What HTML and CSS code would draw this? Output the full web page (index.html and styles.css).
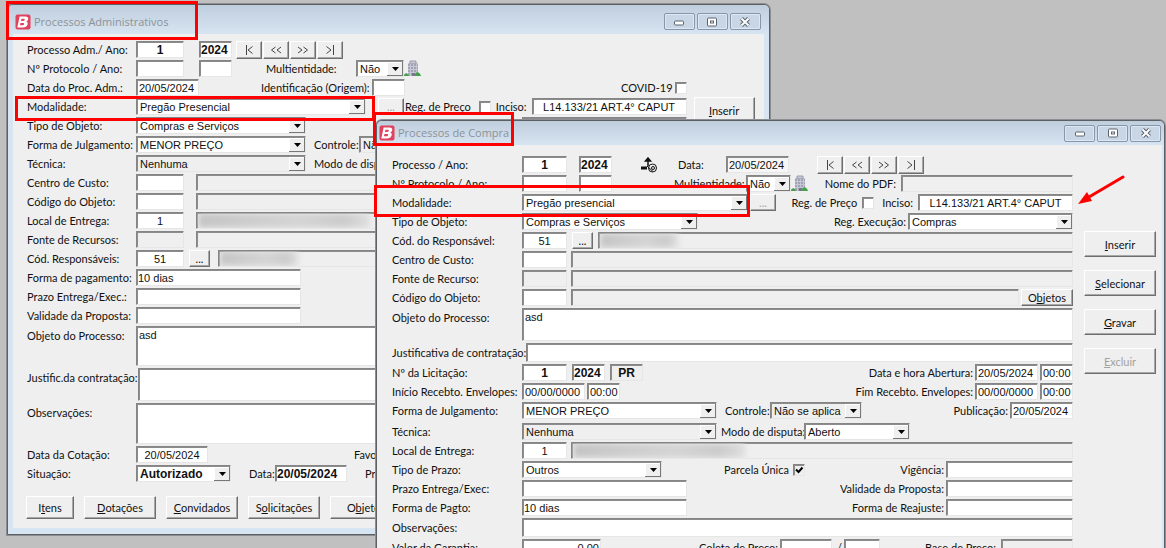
FILE: index.html
```
<!DOCTYPE html>
<html lang="pt-BR">
<head>
<meta charset="utf-8">
<title>Processos Administrativos</title>
<link rel="stylesheet" href="styles.css">
</head>
<body>
<svg class="defs" aria-hidden="true">
  <symbol id="logo" viewBox="0 0 16 16"><rect x=".5" y=".5" width="15" height="15" rx="2" fill="#e0425f"/><path d="M4.6 2.5h5.6c2.8 0 3.5 1.5 2.9 3.1-.4 1-1 1.700-2 2 1.500.4 1.900 1.500 1.500 2.900-.6 2-2.200 3-4.600 3H2.300zM6.500 4.800 6 6.900h2.300c1.700 0 2.100-2.100.5-2.100zM5.500 8.900l-.6 2.300h2.600c1.800 0 2.200-2.300.5-2.300z" fill="#fff" fill-rule="evenodd"/></symbol>
  <symbol id="first" viewBox="0 0 12 12"><path d="M3.500 1v10M9.500 2.500 5 6l4.500 3.500" fill="none" stroke="#444"/></symbol>
  <symbol id="prev" viewBox="0 0 12 12"><path d="M5.500 3 1.500 6l4 3M11 3 7 6l4 3" fill="none" stroke="#444"/></symbol>
  <symbol id="next" viewBox="0 0 12 12"><path d="M1 3l4 3-4 3M6.500 3l4 3-4 3" fill="none" stroke="#444"/></symbol>
  <symbol id="last" viewBox="0 0 12 12"><path d="M2.500 2.500 7 6 2.500 9.500M9.500 1v10" fill="none" stroke="#444"/></symbol>
  <symbol id="building" viewBox="0 0 17 17"><path d="M6 1h6v3H6z" fill="#c9c9d6" stroke="#9a9aaa"/><path d="M4 3.500h10V16H4z" fill="#a3a3b6"/><path d="M4 6.500h10M4 9.500h10M4 12.500h10M6.500 4v12M9.500 4v12M12.500 4v12" stroke="#c6c6d4"/><path d="M8 13h3v3H8z" fill="#77778a"/><path d="M0 16c0-2 1.500-3 3-2.500S5 16 5 16zM11 16c0-3 1.500-4.500 3.500-3.500S17 16 17 16z" fill="#43a04b"/></symbol>
  <symbol id="min" viewBox="0 0 12 12"><rect x="1.500" y="5" width="9" height="4" rx="1" fill="#fff" stroke="#5b6470"/></symbol>
  <symbol id="max" viewBox="0 0 12 12"><rect x="1.500" y="2" width="9" height="8" rx="1" fill="#fff" stroke="#5b6470"/><rect x="4.500" y="5" width="3" height="2" fill="#fff" stroke="#5b6470"/></symbol>
  <symbol id="close" viewBox="0 0 12 12"><path d="m2.500 2.500 7 7m0-7-7 7" stroke="#5b6470" stroke-width="4"/><path d="m2.500 2.500 7 7m0-7-7 7" stroke="#fff" stroke-width="2"/></symbol>
</svg>
<main class="desktop">

<section class="window window-adm">
  <header class="titlebar">
    <svg class="logo"><use href="#logo"/></svg><h1>Processos Administrativos</h1>
    <div class="controls"><button aria-label="Minimizar"><svg><use href="#min"/></svg></button><button aria-label="Maximizar"><svg><use href="#max"/></svg></button><button aria-label="Fechar"><svg><use href="#close"/></svg></button></div>
  </header>
  <div class="content">
    <form class="form">
      <div class="row"><label class="lab" for="a1">Processo Adm./ Ano:</label><input class="w48 center bold" id="a1" value="1"><input class="w32 m15 bold" aria-label="Ano" value="2024">
        <div class="nav m4"><button type="button" aria-label="Primeiro"><svg><use href="#first"/></svg></button><button type="button" aria-label="Anterior"><svg><use href="#prev"/></svg></button><button type="button" aria-label="Próximo"><svg><use href="#next"/></svg></button><button type="button" aria-label="Último"><svg><use href="#last"/></svg></button></div></div>
      <div class="row"><label class="lab" for="a2">Nº Protocolo / Ano:</label><input class="w48" id="a2"><input class="w32 m15" aria-label="Ano do protocolo"><label class="w90 m34" for="a3">Multientidade:</label><select class="w48" id="a3"><option>Não</option></select><svg class="building"><use href="#building"/></svg></div>
      <div class="row"><label class="lab" for="a4">Data do Proc. Adm.:</label><input class="w64 date" id="a4" value="20/05/2024"><label class="w111 m62" for="a5">Identificação (Origem):</label><input class="w32" id="a5"><div class="right"><label for="a6">COVID-19</label><input type="checkbox" id="a6"></div></div>
      <div class="row"><label class="lab" for="a7">Modalidade:</label><select class="w230" id="a7"><option>Pregão Presencial</option></select><button type="button" class="btn w26 m12 off">...</button><div class="right"><label for="a8">Reg. de Preço</label><input class="m8" type="checkbox" id="a8"><label class="m5" for="a9">Inciso:</label><input class="w155 m5 center" id="a9" value="L14.133/21 ART.4° CAPUT"></div></div>
      <div class="row"><label class="lab" for="a10">Tipo de Objeto:</label><select class="w170" id="a10"><option>Compras e Serviços</option></select><div class="right"><input class="w165 gray" aria-label="Complemento"></div></div>
      <div class="row"><label class="lab" for="a11">Forma de Julgamento:</label><select class="w170" id="a11"><option>MENOR PREÇO</option></select><label class="w45 m8" for="a12">Controle:</label><select class="w92 gray" id="a12"><option>Não se aplica</option></select></div>
      <div class="row"><label class="lab" for="a13">Técnica:</label><select class="w170 gray" id="a13"><option>Nenhuma</option></select><label class="m8" for="a14">Modo de disputa:</label><select class="w106" id="a14"><option>Aberto</option></select></div>
      <div class="row"><label class="lab" for="a15">Centro de Custo:</label><input class="w48" id="a15"><input class="fill gray m12" aria-label="Descrição do centro de custo" readonly></div>
      <div class="row"><label class="lab" for="a16">Código do Objeto:</label><input class="w48" id="a16"><input class="fill gray m12" aria-label="Descrição do objeto" readonly></div>
      <div class="row"><label class="lab" for="a17">Local de Entrega:</label><input class="w48 center" id="a17" value="1"><div class="masked fill m12"><span class="smudge long"></span></div></div>
      <div class="row"><label class="lab" for="a18">Fonte de Recursos:</label><input class="w48 gray" id="a18"><input class="fill gray m12" aria-label="Descrição da fonte" readonly></div>
      <div class="row"><label class="lab" for="a19">Cód. Responsáveis:</label><input class="w48 center" id="a19" value="51"><button type="button" class="btn w21 m5">...</button><div class="masked fill m8"><span class="smudge short"></span></div></div>
      <div class="row"><label class="lab" for="a20">Forma de pagamento:</label><input class="w165" id="a20" value="10 dias"></div>
      <div class="row"><label class="lab" for="a21">Prazo Entrega/Exec.:</label><input class="w165" id="a21"></div>
      <div class="row"><label class="lab" for="a22">Validade da Proposta:</label><input class="w165" id="a22"></div>
      <div class="row tall"><label class="lab" for="a23">Objeto do Processo:</label><textarea class="fill h40" id="a23">asd</textarea></div>
      <div class="row tall"><label class="lab" for="a24">Justific.da contratação:</label><textarea class="fill h33" id="a24"></textarea></div>
      <div class="row tall"><label class="lab" for="a25">Observações:</label><textarea class="fill h41" id="a25"></textarea></div>
      <div class="row"><label class="lab" for="a26">Data da Cotação:</label><input class="w72 center" id="a26" value="20/05/2024"><label class="m146" for="a27">Favorecido:</label><input class="w165" id="a27"></div>
      <div class="row"><label class="lab" for="a28">Situação:</label><select class="w95 bold" id="a28"><option>Autorizado</option></select><label class="w26 m18" for="a29">Data:</label><input class="w72 bold" id="a29" value="20/05/2024"><label class="m18" for="a30">Prazo:</label><input class="w48" id="a30"></div>
      <div class="actions"><button type="button" class="btn w48"><span>I<u>t</u>ens</span></button><button type="button" class="btn w72"><span><u>D</u>otações</span></button><button type="button" class="btn w72"><span><u>C</u>onvidados</span></button><button type="button" class="btn w72"><span>S<u>o</u>licitações</span></button><button type="button" class="btn w72"><span>O<u>b</u>jetos</span></button></div>
    </form>
    <aside class="side"><button class="btn"><span><u>I</u>nserir</span></button></aside>
  </div>
</section>

<section class="window window-compra">
  <header class="titlebar">
    <svg class="logo"><use href="#logo"/></svg><h1>Processos de Compra</h1>
    <div class="controls"><button aria-label="Minimizar"><svg><use href="#min"/></svg></button><button aria-label="Maximizar"><svg><use href="#max"/></svg></button><button aria-label="Fechar"><svg><use href="#close"/></svg></button></div>
  </header>
  <div class="content">
    <form class="form">
      <div class="row"><label class="lab" for="b1">Processo / Ano:</label><input class="w45 center bold" id="b1" value="1"><input class="w32 m12 bold" aria-label="Ano" value="2024"><svg class="tool" viewBox="0 0 18 16"><path d="M1 9.500h6v3H1z" fill="#111"/><path d="M8 2v7M5.500 4 8 1l2.500 3z" fill="#111" stroke="#111" stroke-width="1.500"/><circle cx="12.500" cy="11" r="4" fill="#efefef" stroke="#111"/><circle cx="13" cy="11" r="1.500" fill="none" stroke="#111"/><path d="m7 9 6 5.500" stroke="#111"/></svg><label class="w48 m20" for="b2">Data:</label><input class="w64 date pale" id="b2" value="20/05/2024">
        <div class="nav m28"><button type="button" aria-label="Primeiro"><svg><use href="#first"/></svg></button><button type="button" aria-label="Anterior"><svg><use href="#prev"/></svg></button><button type="button" aria-label="Próximo"><svg><use href="#next"/></svg></button><button type="button" aria-label="Último"><svg><use href="#last"/></svg></button></div></div>
      <div class="row"><label class="lab" for="b3">Nº Protocolo / Ano:</label><input class="w45" id="b3"><input class="w32 m12" aria-label="Ano do protocolo"><label class="w72 m62" for="b4">Multientidade:</label><select class="w45" id="b4"><option>Não</option></select><svg class="building"><use href="#building"/></svg><div class="right"><label for="b5">Nome do PDF:</label><input class="w172 m5 gray" id="b5"></div></div>
      <div class="row"><label class="lab" for="b6">Modalidade:</label><select class="w226" id="b6"><option>Pregão presencial</option></select><button type="button" class="btn w26 m2 off">...</button><div class="right"><label for="b7">Reg. de Preço</label><input class="m5" type="checkbox" id="b7"><label class="m8" for="b8">Inciso:</label><input class="w155 m5 center" id="b8" value="L14.133/21 ART.4° CAPUT"></div></div>
      <div class="row"><label class="lab" for="b9">Tipo de Objeto:</label><select class="w176" id="b9"><option>Compras e Serviços</option></select><div class="right"><label for="b10">Reg. Execução:</label><select class="w165 m2" id="b10"><option>Compras</option></select></div></div>
      <div class="row"><label class="lab" for="b11">Cód. do Responsável:</label><input class="w45 center" id="b11" value="51"><button type="button" class="btn w21 m5">...</button><div class="masked fill m5"><span class="smudge short"></span></div></div>
      <div class="row"><label class="lab" for="b12">Centro de Custo:</label><input class="w45" id="b12"><input class="fill gray m4" aria-label="Descrição do centro de custo" readonly></div>
      <div class="row"><label class="lab" for="b13">Fonte de Recurso:</label><input class="w45 gray" id="b13"><input class="fill gray m4" aria-label="Descrição da fonte" readonly></div>
      <div class="row"><label class="lab" for="b14">Código do Objeto:</label><input class="w45" id="b14"><input class="fill gray m4" aria-label="Descrição do objeto" readonly><button type="button" class="btn w52 m2"><span>O<u>b</u>jetos</span></button></div>
      <div class="row tall"><label class="lab" for="b15">Objeto do Processo:</label><textarea class="fill h33" id="b15">asd</textarea></div>
      <div class="row r19"><label class="lab" for="b16">Justificativa de contratação:</label><input class="fill" id="b16"></div>
      <div class="row"><label class="lab" for="b17">Nº da Licitação:</label><input class="w45 center bold" id="b17" value="1"><input class="w32 m5 bold" aria-label="Ano da licitação" value="2024"><input class="w32 m5 bold gray center" aria-label="Sigla" value="PR"><div class="right"><label for="b18">Data e hora Abertura:</label><input class="w64 m2 date" id="b18" value="20/05/2024"><input class="w32 m2 date" aria-label="Hora de abertura" value="00:00"></div></div>
      <div class="row"><label class="lab" for="b19">Início Recebto. Envelopes:</label><input class="w64 date" id="b19" value="00/00/0000"><input class="w32 m2 date" aria-label="Hora inicial" value="00:00"><div class="right"><label for="b20">Fim Recebto. Envelopes:</label><input class="w64 m2 date" id="b20" value="00/00/0000"><input class="w32 m2 date" aria-label="Hora final" value="00:00"></div></div>
      <div class="row"><label class="lab" for="b21">Forma de Julgamento:</label><select class="w195" id="b21"><option>MENOR PREÇO</option></select><label class="w45 m8" for="b22">Controle:</label><select class="w92 gray" id="b22"><option>Não se aplica</option></select><div class="right"><label for="b23">Publicação:</label><input class="w64 m2 date" id="b23" value="20/05/2024"></div></div>
      <div class="row spaced"><label class="lab" for="b24">Técnica:</label><select class="w195 gray" id="b24"><option>Nenhuma</option></select><label class="w83 m4" for="b25">Modo de disputa:</label><select class="w106" id="b25"><option>Aberto</option></select></div>
      <div class="row"><label class="lab" for="b26">Local de Entrega:</label><input class="w45 center" id="b26" value="1"><div class="masked fill m4"><span class="smudge long"></span></div></div>
      <div class="row"><label class="lab" for="b27">Tipo de Prazo:</label><select class="w140" id="b27"><option>Outros</option></select><label class="w67 m62" for="b28">Parcela Única</label><input type="checkbox" id="b28" checked><div class="right"><label for="b29">Vigência:</label><input class="w127 m2" id="b29"></div></div>
      <div class="row"><label class="lab" for="b30">Prazo Entrega/Exec:</label><input class="w165" id="b30"><div class="right"><label for="b31">Validade da Proposta:</label><input class="w127 m2" id="b31"></div></div>
      <div class="row"><label class="lab" for="b32">Forma de Pagto:</label><input class="w165" id="b32" value="10 dias"><div class="right"><label for="b33">Forma de Reajuste:</label><input class="w127 m2" id="b33"></div></div>
      <div class="row r19"><label class="lab" for="b34">Observações:</label><input class="fill" id="b34"></div>
      <div class="row"><label class="lab" for="b35">Valor da Garantia:</label><input class="w79 end" id="b35" value="0,00"><div class="right"><label for="b36">Coleta de Preço:</label><input class="w52 m2" id="b36"><span class="m5">/</span><input class="w36 m2" aria-label="Ano da coleta"><label class="m45" for="b37">Base de Preço:</label><input class="w72 m5 gray" id="b37"></div></div>
    </form>
    <aside class="side"><button class="btn"><span><u>I</u>nserir</span></button><button class="btn"><span><u>S</u>elecionar</span></button><button class="btn"><span><u>G</u>ravar</span></button><button class="btn off" disabled><span><u>E</u>xcluir</span></button></aside>
  </div>
</section>

<div class="mark mark-title-adm"></div>
<div class="mark mark-mod-adm"></div>
<div class="mark mark-title-compra"></div>
<div class="mark mark-mod-compra"></div>
<svg class="arrow" viewBox="0 0 48 32"><path d="M46 3 12 23" stroke="#f00" stroke-width="3" stroke-linecap="round"/><path d="m1 30 9-12 5 9z" fill="#f00"/></svg>
</main>
</body>
</html>
```

FILE: styles.css
```
* { box-sizing: border-box; }
body { margin: 0; background: #c0c0c0; color: #111; font: 11px/13px Lato, "Liberation Sans", sans-serif; }
.defs { display: none; }
.desktop { position: relative; height: 100vh; overflow: hidden; }

.window { position: absolute; background: #d7e4f2; border: 1px solid #5c6064; border-radius: 6px 6px 0 0; box-shadow: 0 0 0 1px #8b8f94; }
.window-adm { left: 7px; top: 4px; right: 34%; padding: 0 5px 6px; }
.window-compra { left: 376px; top: 120px; right: 1px; padding: 0 2px 6px 0; }
.titlebar { display: flex; align-items: center; background: linear-gradient(#bfcedd, #d7e4f2); }
.window-adm .titlebar { height: 29px; margin: 0 -5px; padding: 4px 8px 0 7px; border-radius: 5px 5px 0 0; }
.window-compra .titlebar { height: 24px; margin-right: -2px; padding: 0 3px 0 2px; border-radius: 5px 5px 0 0; }
.logo { width: 16px; height: 16px; }
h1 { margin: 0 0 0 3px; font: 11px/16px "Open Sans", "Noto Sans", sans-serif; color: #8d9298; }
.controls { display: flex; gap: 2px; margin-left: auto; }
.controls button { display: flex; align-items: center; justify-content: center; width: 31px; height: 17px; padding: 0; background: #c8d6e5; border: 1px solid #8796a8; border-radius: 2px; box-shadow: inset 0 0 0 1px #dce8f3; }
.controls svg, .nav svg { width: 12px; height: 12px; }

.content { display: flex; background: #efefef; }
.window-adm .content { padding: 7px 9px 9px 14px; gap: 7px; }
.window-compra .content { padding: 11px 6px 9px 15px; gap: 11px; }
.form { flex: 1; min-width: 0; display: flex; flex-direction: column; gap: 2px; }
.row { display: flex; align-items: center; height: 17px; }
.row > *, .right > * { flex-shrink: 0; }
.row.r19 { height: 19px; }
.row.spaced { margin-top: 2px; }
.row.tall { height: auto; align-items: flex-start; }
.row.tall .lab { padding-top: 3px; }
.lab { min-width: 109px; }
.window-compra .lab { min-width: 130px; }
label { white-space: nowrap; }
.right { display: flex; align-items: center; margin-left: auto; height: 100%; }
.row > .fill { flex: 1 1 0; min-width: 0; }

input, select, textarea, .masked { height: 100%; margin: 0; padding: 0 1px; font: 11px/13px "Liberation Sans", sans-serif; color: #111; background-color: #fff; border: 1px solid; border-color: #858585 #e6e6e6 #e6e6e6 #858585; border-radius: 0; box-shadow: inset 1px 1px #8c8c8c; outline: 0; }
textarea { display: block; resize: none; padding: 2px; overflow: hidden; }
select { appearance: none; padding: 1px 18px 0 3px; background-repeat: no-repeat; background-position: right 0 top 1px; background-image: url("data:image/svg+xml,%3Csvg xmlns='http://www.w3.org/2000/svg' width='16' height='14'%3E%3Cpath d='M0 0h16v14H0z' fill='%23777'/%3E%3Cpath d='M0 0h15v13H0z' fill='%23fff'/%3E%3Cpath d='M1 1h14v12H1z' fill='%23efefef'/%3E%3Cpath d='M5 5h7L8.500 9z'/%3E%3C/svg%3E"); }
input[type="checkbox"] { appearance: none; width: 12px; height: 12px; margin-left: 2px; padding: 0; }
input[type="checkbox"].m5 { margin-left: 5px; }
input[type="checkbox"].m8 { margin-left: 8px; }
input[type="checkbox"]:checked { background: url("data:image/svg+xml,%3Csvg xmlns='http://www.w3.org/2000/svg' width='10' height='10'%3E%3Cpath d='m2 4.500 2.500 2.500L8.500 2.500' fill='none' stroke='%23000' stroke-width='2'/%3E%3C/svg%3E"); }
.gray { background-color: #efefef; }
.pale { background-color: #f6f6f6; }
.center { text-align: center; }
.end { text-align: right; }
.bold { font-weight: 700; font-size: 12px; }
input.date { padding: 0 0 0 2px; }
.masked { background: #efefef; overflow: hidden; }
.smudge { display: block; height: 15px; filter: blur(3px); background: linear-gradient(90deg, #c4c4c4, #cecece 35%, #d4d4d4 60%, #cbcbcb 85%, #dedede); }
.smudge.long { width: 172px; }
.smudge.short { width: 78px; }

.btn, .nav button { display: flex; align-items: center; justify-content: center; height: 100%; padding: 0; font: inherit; color: #111; background: #efefef; border: 1px solid; border-color: #fff #6e6e6e #6e6e6e #fff; box-shadow: inset -1px -1px #a8a8a8; }
.btn.off { color: #a2a2a2; }
.nav { display: flex; gap: 1px; height: 18px; }
.nav button { width: 26px; }
.actions { display: flex; gap: 10px; height: 23px; margin: 12px 0 0 -1px; }
.side { display: flex; flex-direction: column; flex-shrink: 0; gap: 13px; }
.side .btn { width: 100%; height: 26px; }
.window-adm .side { width: 61px; padding-top: 56px; }
.window-compra .side { width: 72px; padding-top: 75px; }
.building { width: 17px; height: 17px; }
.tool { width: 18px; height: 16px; margin-left: 28px; }

.h33 { height: 33px; } .h40 { height: 40px; } .h41 { height: 41px; }
.w21 { width: 21px; } .w26 { width: 26px; } .w32 { width: 33px; } .w36 { width: 36px; }
.w45 { width: 45px; } .w48 { width: 48px; } .w52 { width: 52px; } .w64 { width: 63px; }
.w67 { width: 67px; } .w72 { width: 72px; } .w79 { width: 79px; } .w83 { width: 83px; } .w90 { width: 90px; }
.w92 { width: 92px; } .w95 { width: 95px; } .w106 { width: 106px; } .w111 { width: 111px; } .w127 { width: 127px; }
.w140 { width: 140px; } .w155 { width: 155px; } .w165 { width: 165px; } .w170 { width: 170px; }
.w172 { width: 172px; } .w176 { width: 176px; } .w195 { width: 195px; } .w226 { width: 226px; } .w230 { width: 230px; }
.m2 { margin-left: 2px; } .m4 { margin-left: 4px; } .m5 { margin-left: 5px; } .m8 { margin-left: 8px; }
.m12 { margin-left: 12px; } .m15 { margin-left: 15px; } .m18 { margin-left: 18px; } .m20 { margin-left: 20px; } .m28 { margin-left: 28px; }
.m34 { margin-left: 34px; } .m45 { margin-left: 45px; } .m62 { margin-left: 62px; }
.m146 { margin-left: 146px; }

.mark { position: absolute; border: 3px solid #f00; pointer-events: none; }
.mark-title-adm { left: 6px; top: 1px; width: 192px; height: 39px; }
.mark-mod-adm { left: 15px; top: 96px; width: 360px; height: 25px; }
.mark-title-compra { left: 373px; top: 112px; width: 141px; height: 34px; }
.mark-mod-compra { left: 374px; top: 185px; width: 376px; height: 32px; }
.arrow { position: absolute; right: 41px; top: 174px; width: 48px; height: 32px; }
```
